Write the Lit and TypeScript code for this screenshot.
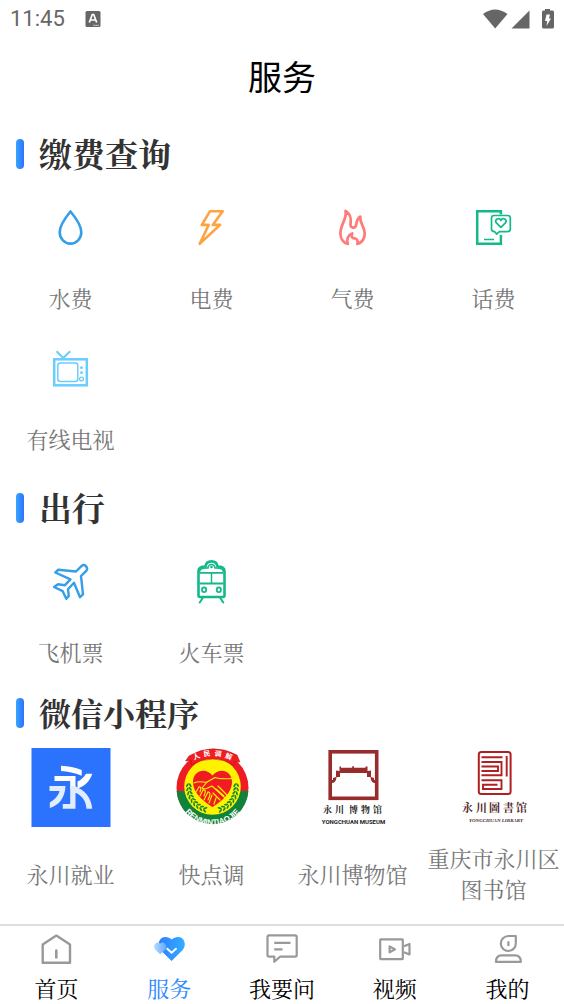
import { LitElement, html, svg, css } from "lit";
import type { SVGTemplateResult } from "lit";
import { customElement, property } from "lit/decorators.js";

interface Entry {
  label: string;
  art: SVGTemplateResult;
}

const BLUE = "#349ee8";
const GREEN = "#13b98a";
const SKY = "#6acdff";
const MAROON = "#982b2b";
const CRIMSON = "#b01f24";
const INK = "#4c241e";

const drop = svg`<path d="M22 5.5C17 11.5 11.2 19 11.2 26.3a10.8 11.3 0 0 0 21.6 0C32.8 19 27 11.5 22 5.5Z" fill="none" stroke=${BLUE} stroke-width="2.6" stroke-linejoin="round"/>`;

const bolt = svg`<path d="M20.5 5.2H33.2L23.2 18.9H30.6L10.2 37.8L19.2 18.9H12.3Z" fill="none" stroke="#ffa243" stroke-width="2.6" stroke-linejoin="round"/>`;

const flame = svg`<path d="M15 5C17 12 10.2 18 9.9 27C9.8 33 13 37 17.5 38C15.5 33 17.5 29 21.8 27.5C20 31 22 32 24 32.3C27 33 27.8 35.5 26.8 38C31.5 36.5 34.4 33 34.2 27C34 20.5 29 17 29.8 10.5C26.5 12 26 17 25.5 19.5C24.5 22.5 20.3 22.5 20 19C19.8 16 22.5 9.5 15 5Z" fill="none" stroke="#ff7a78" stroke-width="2.7" stroke-linejoin="round"/>`;

const phone = svg`
  <g fill="none" stroke=${GREEN} stroke-width="2.5">
    <path d="M29.4 8.5V5.2H5.7V37.8H29.4V29"/>
    <path d="M22.5 9.5H36Q38.8 9.5 38.8 12V23Q38.8 25.6 36 25.6H28L25.2 28L23 25.6Q20 25.6 20 23V12Q20 9.5 22.5 9.5Z" stroke-width="1.7"/>
    <path d="M29.4 21.3L24.6 16.6C22.8 13.5 27.5 10.8 29.4 14.4C31.3 10.8 36 13.5 34.2 16.6Z" stroke-width="1.8" stroke-linejoin="round"/>
    <path d="M12.5 33.5H22.5" stroke-width="1.5"/>
  </g>`;

const television = svg`
  <g fill="none" stroke=${SKY}>
    <path d="M8 4.2L14.8 11L21.6 4.2" stroke-width="2"/>
    <rect x="5.7" y="12.3" width="32.6" height="26" stroke-width="2.5"/>
    <rect x="9.3" y="16" width="20" height="18.6" rx="2.5" stroke-width="1.5"/>
    <circle cx="33" cy="32" r="1.9" stroke-width="1.4"/>
  </g>
  <circle cx="33" cy="20.7" r="1.4" fill=${SKY}/>
  <circle cx="33" cy="25.7" r="1.4" fill=${SKY}/>`;

const plane = svg`<path d="M33.2 5.8L27.5 11.5L9.8 9.7L6.8 12.5L22 19.3L16.2 25.3L9.5 24.3L5.6 27L14.2 31.2L17.8 38.8L20.3 36L19.5 29.3L25.5 22.7L31.5 37.2L34.5 34.3L32.5 16L38 10.6C40 8 36 3 33.2 5.8Z" fill="none" stroke=${BLUE} stroke-width="2.4" stroke-linejoin="round"/>`;

const train = svg`
  <g fill="none" stroke=${GREEN} stroke-width="2.6">
    <path d="M10.5 37H33.5Q35 37 35 35.5V11C35 8 32.5 6.5 28 6.5C27.5 3 25 1.4 22 1.4S16.5 3 16 6.5C11.5 6.5 9 8 9 11V35.5Q9 37 10.5 37Z"/>
    <path d="M10 12.8H34M10 23.5H34" stroke-width="1.8"/>
    <path d="M22 12.8V23.5" stroke-width="1.5"/>
    <ellipse cx="14.6" cy="29.8" rx="2.1" ry="2.4" stroke-width="1.8"/>
    <ellipse cx="29.3" cy="29.8" rx="2.1" ry="2.4" stroke-width="1.8"/>
    <path d="M13.2 38L10.2 42.5M30.8 38L33.8 42.5" stroke-width="2" stroke-linecap="round"/>
  </g>
  <path d="M10 12C10 9 12 8 17 8H18.500A3.500 3.500 0 0 1 25.500 8H27C32 8 34 9 34 12" fill="none" stroke=${GREEN} stroke-width="1.6"/>
  <circle cx="22" cy="7" r="1.3" fill=${GREEN}/>`;

const employment = svg`
  <rect x="0.5" width="79" height="79" fill="#2b72fc"/>
  <g fill="#fff">
    <path d="M30 17.7Q41 18 50.7 22V27.7Q40 23.5 30 23Z"/>
    <path d="M23.5 28H44.5V41H39.2V33H23.5Z"/>
    <path d="M55 25.7H61.2C59 33 54 38 46.5 40.5V33.5C50 32 53 29 55 25.7Z"/>
  </g>
  <g fill="#e2ecff">
    <path d="M39.2 38H44.5V60.8H31.8V56H39.2Z"/>
    <path d="M18.5 38H34.5C34 50 28 57 18.8 60V54.5C24 51.5 27.5 47.5 28.5 43H18.5Z"/>
    <path d="M43.5 38C54 42 60.5 50 61.2 60.8H55.5C55 53 51 47 43.5 44.5Z"/>
  </g>`;

const leaves = [0, 1, 2, 3, 4, 5, 6, 7, 8];

const wreathLeaf = (i: number, side: number) => {
  const a = ((i * 9.5 + 12) * Math.PI) / 180;
  const cx = 40.5 + side * 23.7 * Math.cos(a - 0.25);
  const cy = 39 + 23.7 * Math.sin(a - 0.25);
  const turn = side * (i * 9.5 - 2) + 90;
  return svg`<g transform="translate(${cx} ${cy}) rotate(${turn})" fill="#128a35">
    <ellipse cx="0" cy="1.7" rx="2.2" ry="0.9" transform="rotate(32)"/>
    <ellipse cx="0" cy="-1.7" rx="2.2" ry="0.9" transform="rotate(-32)"/>
  </g>`;
};

const mediation = svg`
  <defs>
    <path id="arc-top" d="M16 15.500Q40.500 0 65 15.500"/>
    <path id="arc-bottom" d="M5.500 42A35 35 0 0 0 75.500 42"/>
  </defs>
  <circle cx="40.500" cy="39.700" r="36" fill="#ee1c24"/>
  <path d="M4.600 43A36 36 0 0 0 76.400 43Z" fill="#11823a"/>
  <circle cx="40.500" cy="38.500" r="28.300" fill="#fff200"/>
  <path d="M13.500 13L17 8Q40.500 -6 65 7L68 14L62.500 13.500L62 17Q41 5 19 17L19.500 12.500Z" fill="#f01d22" stroke="#b60f16" stroke-width="0.500"/>
  ${leaves.map((i) => wreathLeaf(i, -1))}
  ${leaves.map((i) => wreathLeaf(i, 1))}
  <path d="M40.500 59C34 55 21 46 21 34C21 22 34 19 40.500 27.500C47 19 60 22 60 34C60 46 47 55 40.500 59Z" fill="#ef1c23"/>
  <g fill="none" stroke="#fff200" stroke-width="1.100" stroke-linecap="round" stroke-linejoin="round">
    <path d="M22 35C28 32 32 35 35 34L43 29.500C47 31 52 31 60 30.500"/>
    <path d="M35 34L30 40C33 43 37 39 40 38L52 49C54 51 56 48 54 46L46 38"/>
    <path d="M24 44L27 39M28 48L31 42M32 52L36 44M37 55L40 47M42 56L44 50M48 52L41 45M52 48L44 41"/>
    <path d="M27 39Q30 38 28 44M31 42Q35 41 32 48M36 44Q40 44 36 52"/>
  </g>
  <text fill="#fff" font-size="7" font-weight="700" text-anchor="middle" font-family="Noto Sans CJK SC, sans-serif"><textPath href="#arc-top" startOffset="50%">人\u2002民\u2002调\u2002解</textPath></text>
  <text fill="#fff" font-size="8" font-weight="700" text-anchor="middle" font-family="Liberation Sans, sans-serif"><textPath href="#arc-bottom" startOffset="50%">RENMINTIAOJIE</textPath></text>`;

const museum = svg`
  <rect x="17.200" y="3.800" width="46.500" height="46.500" fill="none" stroke=${MAROON} stroke-width="3.600"/>
  <path d="M26.500 19V18.500H28V19.700H39.200V18.200H41V19.700H52.500V18.500H54.500V23L58 22.500V29L61 30V32H63V35C59 35 58 33 57.500 29H54V25H27V29H23.500C23 33 22 35 18 35V32H20V30L23 29V22.500L26.500 23Z" fill=${MAROON}/>
  <text x="10 22 36 48 60" y="65" fill="#222" font-size="9" font-weight="700" font-family="Noto Serif CJK SC, Noto Sans CJK SC, serif">永川博物馆</text>
  <text x="40.500" y="75.500" fill="#222" font-size="6" font-weight="700" text-anchor="middle" font-family="Roboto, sans-serif">YONGCHUAN MUSEUM</text>`;

const library = svg`
  <g fill="none" stroke=${CRIMSON} stroke-width="2">
    <rect x="24.800" y="4" width="31.800" height="42" rx="2.500"/>
    <path d="M27.500 9.300H48.500M52.700 8V28.500M27.500 14H47.500V27.300H27.500M27.500 18.500H44V23H27.500M27.500 32.300H47.500V41H29V36.700H43.500" stroke-width="1.900"/>
  </g>
  <text x="8 22 35 49 62" y="63.500" fill=${INK} font-size="11" font-weight="700" font-family="Noto Serif CJK SC, Noto Sans CJK SC, serif">永川圖書馆</text>
  <text x="42" y="74" fill=${INK} font-size="5" font-weight="700" font-style="italic" text-anchor="middle" font-family="Liberation Serif, serif">YONGCHUAN LIBRARY</text>`;

const tabHome = svg`<path d="M4.700 31.800V13.500L18.300 4.600L32 13.500V31.800Z" fill="none" stroke="#999" stroke-width="2.400" stroke-linejoin="round"/><path d="M18.300 19.500V26.500" stroke="#999" stroke-width="2.600" stroke-linecap="round"/>`;

const tabService = svg`
  <defs>
    <linearGradient id="heart-fill" x1="0" x2="1"><stop stop-color="#2c80ff"/><stop offset="1" stop-color="#34adff"/></linearGradient>
    <linearGradient id="heart-soft" x1="0" x2="1"><stop stop-color="#b5dcff"/><stop offset="1" stop-color="#5ea8ff"/></linearGradient>
  </defs>
  <path d="M20.600 30L9.500 19C5.500 14 8 6 14.500 6C17 6 19 7 20.600 8.500C22.500 7 24.500 6 27 6C33.500 6 36 14 31.700 19Z" fill="url(#heart-fill)"/>
  <path d="M9.200 23.300L4 18.500C1.200 14.500 5.500 9.500 9.200 12.500C13 9.500 17.200 14.500 14.500 18.500Z" fill="url(#heart-soft)"/>
  <path d="M16.300 17.800L20.600 21.700L25 17.800" fill="none" stroke="#fff" stroke-width="1.900" stroke-linecap="round" stroke-linejoin="round"/>`;

const tabAsk = svg`<path d="M4.500 4.300H31Q32.700 4.300 32.700 6V24Q32.700 25.700 31 25.700H16L10.300 30.800V25.700H5.300Q3.500 25.700 3.500 24V6Q3.500 4.300 5.300 4.300Z" fill="none" stroke="#999" stroke-width="2.200" stroke-linejoin="round"/><path d="M10.200 11.800H26.500M10.200 18.300H18.500" stroke="#999" stroke-width="2.200"/>`;

const tabVideo = svg`<g fill="none" stroke="#999" stroke-width="2.200" stroke-linejoin="round"><rect x="3.200" y="8.300" width="22.600" height="19.800" rx="0.500"/><path d="M12.600 15.500V21.300L18 18.400Z"/><path d="M27 15.200L32.500 13V23.500L27 21.300"/></g>`;

const tabMe = svg`<g fill="none" stroke="#999" stroke-width="2.200" stroke-linejoin="round"><path d="M18.300 5H25.800V12A7.500 7.500 0 1 1 18.300 5Z"/><path d="M18.400 10.300V15"/><path d="M6 30.900C6 26.500 8 24.300 11.500 24.300H25.200C28.700 24.300 30.800 26.500 30.800 30.900Z"/></g>`;

const payments: Entry[] = [
  { label: "水费", art: drop },
  { label: "电费", art: bolt },
  { label: "气费", art: flame },
  { label: "话费", art: phone },
  { label: "有线电视", art: television },
];

const travel: Entry[] = [
  { label: "飞机票", art: plane },
  { label: "火车票", art: train },
];

const miniPrograms: Entry[] = [
  { label: "永川就业", art: employment },
  { label: "快点调", art: mediation },
  { label: "永川博物馆", art: museum },
  { label: "重庆市永川区图书馆", art: library },
];

const tabs: Entry[] = [
  { label: "首页", art: tabHome },
  { label: "服务", art: tabService },
  { label: "我要问", art: tabAsk },
  { label: "视频", art: tabVideo },
  { label: "我的", art: tabMe },
];

@customElement("status-bar")
class StatusBar extends LitElement {
  static styles = css`
    :host {
      display: flex;
      align-items: center;
      height: 38px;
      padding: 0 10px;
      color: #666;
      font: 22px/38px Roboto, sans-serif;
    }
    .badge { margin-left: 20px; }
    .system { margin-left: auto; }
    svg { display: block; }
  `;
  render() {
    return html`
      <span>11:45</span>
      <svg class="badge" width="16" height="16" viewBox="0 0 16 16" aria-hidden="true">
        <rect x="0.5" width="15" height="16" rx="1.5" fill="#666"/>
        <path d="M4.3 11.5L7.3 3.5H8.7L11.7 11.5M5.5 9H10.5" fill="none" stroke="#fff" stroke-width="1.7"/>
        <path d="M8.5 14.3H14" stroke="#fff" stroke-width="1" stroke-dasharray="1.2 0.8"/>
      </svg>
      <svg class="system" width="71" height="20" viewBox="0 0 71 20" fill="#666" aria-hidden="true">
        <path d="M0 5Q12 -4 24.5 5L12.2 19.5Z"/>
        <path d="M28.500 19.500L46.500 1.500V19.500Z"/>
        <path d="M62 0H67V1.500H69.500Q71 1.500 71 3V18Q71 19.500 69.500 19.500H60.500Q59 19.500 59 18V3Q59 1.500 60.500 1.500H62Z"/>
        <path d="M63.500 5.500H67L66 9.500H68L63.500 17L64.200 12H62Z" fill="#fff"/>
      </svg>
    `;
  }
}

@customElement("service-section")
class ServiceSection extends LitElement {
  @property() heading = "";
  @property({ attribute: false }) entries: Entry[] = [];
  @property({ type: Boolean }) logos = false;

  static styles = css`
    :host { display: block; }
    .heading {
      display: flex;
      align-items: center;
      gap: 15px;
      height: 40px;
      margin: 0;
      padding: 0 16px;
      color: #333;
      font-size: 33px;
      line-height: 38px;
      font-weight: 700;
    }
    .heading.compact { font-size: 32px; }
    .heading::before {
      content: "";
      width: 8px;
      height: 30px;
      border-radius: 4px;
      background: linear-gradient(90deg, #38a5ff, #2f72fb);
    }
    .title { padding-bottom: 2px; }
    .grid {
      display: grid;
      grid-template-columns: repeat(4, 1fr);
    }
    .item {
      display: flex;
      flex-direction: column;
      align-items: center;
      gap: 32px;
      padding: 32px 0 2px;
      color: #777;
      font-size: 22px;
      line-height: 31px;
      text-align: center;
      text-decoration: none;
    }
    .icon { display: block; width: 44px; height: 44px; }
    .logos .item { gap: 14px; padding-top: 15px; }
    .logos .icon { width: 80px; height: 80px; }
    .logos .label {
      display: flex;
      align-items: center;
      min-height: 62px;
    }
  `;

  render() {
    const box = this.logos ? "0 0 80 80" : "0.5 0 44 44";
    return html`
      <h2 class="heading ${this.logos ? "compact" : ""}"><span class="title">${this.heading}</span></h2>
      <div class="grid ${this.logos ? "logos" : ""}">
        ${this.entries.map(
          (e) => html`<a class="item" href="#">
            <svg class="icon" viewBox=${box} aria-hidden="true">${e.art}</svg>
            <span class="label">${e.label}</span>
          </a>`
        )}
      </div>
    `;
  }
}

@customElement("tab-bar")
class TabBar extends LitElement {
  static styles = css`
    .tabs {
      display: flex;
      border-top: 2px solid #ddd;
      padding: 5px 0 1px;
    }
    .tab {
      flex: 1;
      display: flex;
      flex-direction: column;
      align-items: center;
      gap: 6px;
      color: #000;
      font-size: 22px;
      line-height: 30px;
      text-decoration: none;
    }
    .active { color: #2f88ff; }
    .icon { display: block; width: 36px; height: 36px; }
  `;
  render() {
    return html`<nav class="tabs">
      ${tabs.map(
        (t, i) => html`<a class="tab ${i === 1 ? "active" : ""}" href="#">
          <svg class="icon" viewBox="0 0 36 36" aria-hidden="true">${t.art}</svg>
          <span>${t.label}</span>
        </a>`
      )}
    </nav>`;
  }
}

@customElement("app-root")
class AppRoot extends LitElement {
  static styles = css`
    :host {
      display: flex;
      flex-direction: column;
      min-height: 100vh;
      background: #fff;
      font-family: "Noto Serif CJK SC", "Noto Serif SC", "Source Han Serif SC", "Noto Sans CJK SC", serif;
    }
    .title {
      margin: 0 0 20px;
      color: #000;
      font: 400 34px/76px "Noto Sans CJK SC", sans-serif;
      text-align: center;
    }
    .travel { margin-top: 32px; }
    .programs { margin-top: 24px; }
    .footer { margin-top: auto; }
  `;
  render() {
    return html`
      <status-bar></status-bar>
      <h1 class="title">服务</h1>
      <service-section heading="缴费查询" .entries=${payments}></service-section>
      <service-section class="travel" heading="出行" .entries=${travel}></service-section>
      <service-section class="programs" heading="微信小程序" logos .entries=${miniPrograms}></service-section>
      <tab-bar class="footer"></tab-bar>
    `;
  }
}
